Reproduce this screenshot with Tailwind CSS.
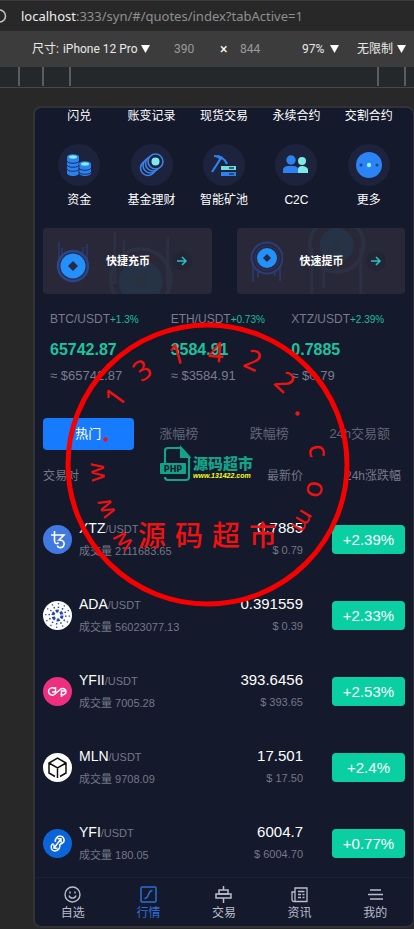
<!DOCTYPE html>
<html lang="zh-CN">
<head>
    <meta charset="UTF-8">
    <meta name="viewport" content="width=device-width, initial-scale=1.0">
    <title>行情</title>
    <script src="https://cdn.jsdelivr.net/npm/@tailwindcss/browser@4"></script>
</head>
<body class="relative flex flex-col h-screen overflow-hidden bg-[#282828] font-['Liberation_Sans','Noto_Sans_CJK_SC',sans-serif]">

    <!-- Browser address bar -->
    <header class="flex items-center h-[31px] shrink-0 border-t border-[#3a3a3a] font-['Noto_Sans','Noto_Sans_CJK_SC',sans-serif]">
        <svg class="-ml-2 size-4 shrink-0" viewBox="0 0 16 16" fill="none" stroke="#c8c8c8" stroke-width="1.5"><circle cx="7.5" cy="8" r="6"/></svg>
        <a href="#/quotes/index?tabActive=1" class="ml-[13px] text-[13px] leading-5 text-[#8f8f8f] whitespace-nowrap"><span class="text-[#eeeeee]">localhost</span>:333/syn/#/quotes/index?tabActive=1</a>
    </header>

    <!-- Device toolbar -->
    <div class="flex items-center h-9 shrink-0 pl-8 pr-2 bg-[#3c3c3c] text-[12px] leading-4 text-[#e8e8e8] font-['Roboto','Noto_Sans_CJK_SC',sans-serif]">
        <label for="device" class="whitespace-nowrap">尺寸:</label>
        <select id="device" class="appearance-none ml-1 w-[78px]"><option>iPhone 12 Pro</option></select>
        <svg class="w-[9px] h-2 shrink-0" viewBox="0 0 9 8" fill="#fff"><path d="M0 0h9L4.500 8z"/></svg>
        <input type="text" aria-label="宽度" value="390" class="ml-6 w-[46px] text-[#9a9a9a]">
        <span class="w-5 text-[14px] text-white">×</span>
        <input type="text" aria-label="高度" value="844" class="w-10 text-[#9a9a9a]">
        <select aria-label="缩放" class="appearance-none ml-auto w-7"><option>97%</option></select>
        <svg class="w-[9px] h-2 shrink-0" viewBox="0 0 9 8" fill="#fff"><path d="M0 0h9L4.500 8z"/></svg>
        <select aria-label="限速" class="appearance-none ml-[18px] w-10"><option>无限制</option></select>
        <svg class="w-[9px] h-2 shrink-0" viewBox="0 0 9 8" fill="#fff"><path d="M0 0h9L4.500 8z"/></svg>
    </div>

    <!-- Ruler -->
    <div class="flex h-[21px] shrink-0 bg-[#25282b] border-b border-[#484848] pb-[1px]">
        <div class="w-5 border-r-2 border-[#5c5c5c]"></div>
        <div class="w-6 border-r-2 border-[#5c5c5c]"></div>
        <div class="w-[27px] border-r-2 border-[#5c5c5c]"></div>
        <div class="flex-1 border-r-2 border-[#5c5c5c]"></div>
        <div class="w-[27px] border-r-2 border-[#5c5c5c]"></div>
        <div class="w-2"></div>
    </div>

    <!-- Phone -->
    <div class="flex-1 min-h-0 flex flex-col mt-[18px] mb-[1px] ml-[33px] border-2 border-r border-[#323237] rounded-lg overflow-hidden bg-[#14192c] text-white">
        <main class="flex-1 min-h-0 overflow-hidden px-2">

            <nav class="grid grid-cols-5 text-center text-[12px] leading-4">
                <a href="#/flash">闪兑</a>
                <a href="#/records">账变记录</a>
                <a href="#/spot">现货交易</a>
                <a href="#/perpetual">永续合约</a>
                <a href="#/delivery">交割合约</a>

                <a href="#/funds" class="flex flex-col items-center mt-5">
                    <svg class="size-[42px] mb-[6px]" viewBox="0 0 42 42">
                        <circle cx="21" cy="21" r="21" fill="#1d233d"/>
                        <path d="M9 13v16c0 4 12 4 12 0V13z" fill="#2c83f0"/>
                        <path d="M21 20v9c0 4 12 4 12 0v-9z" fill="#2c83f0"/>
                        <g fill="none" stroke="#1a2f66" stroke-width="1"><path d="M9 17c0 3 12 3 12 0M9 21c0 3 12 3 12 0M9 25c0 3 12 3 12 0M21 24c0 3 12 3 12 0M21 28c0 3 12 3 12 0M21 19v11"/></g>
                        <ellipse cx="15" cy="13" rx="6" ry="2.700" fill="#2c83f0"/><ellipse cx="15" cy="13" rx="4" ry="1.700" fill="#7ff0f5"/>
                        <ellipse cx="27" cy="20" rx="6" ry="2.700" fill="#2c83f0"/><ellipse cx="27" cy="20" rx="4" ry="1.700" fill="#7ff0f5"/>
                    </svg>
                    资金
                </a>
                <a href="#/fund" class="flex flex-col items-center mt-5">
                    <svg class="size-[42px] mb-[6px]" viewBox="0 0 42 42">
                        <circle cx="21" cy="21" r="21" fill="#1d233d"/>
                        <g fill="#1d233d" stroke="#3a82ea" stroke-width="1.600">
                            <circle cx="17" cy="24" r="7.500"/><circle cx="19.500" cy="21.500" r="7.500"/><circle cx="22" cy="19.500" r="7.500"/><circle cx="24.500" cy="17.500" r="7.500"/>
                        </g>
                        <circle cx="24.500" cy="17.500" r="4" fill="#7fe9f0"/>
                    </svg>
                    基金理财
                </a>
                <a href="#/mining" class="flex flex-col items-center mt-5">
                    <svg class="size-[42px] mb-[6px]" viewBox="0 0 42 42">
                        <circle cx="21" cy="21" r="21" fill="#1d233d"/>
                        <path d="M9 28 18 14M11 12c6 0 11 3 13 8" fill="none" stroke="#2c83f0" stroke-width="2.200"/>
                        <path d="m15 11 5 2-2 3-5-3z" fill="#2c83f0"/>
                        <rect x="18" y="22" width="15" height="4" fill="#74dcdc"/><rect x="18" y="28" width="15" height="4" fill="#2c83f0"/>
                        <path d="M26 24h5M26 30h5" stroke="#1b3c5c" stroke-width="1.500"/>
                    </svg>
                    智能矿池
                </a>
                <a href="#/c2c" class="flex flex-col items-center mt-5">
                    <svg class="size-[42px] mb-[6px]" viewBox="0 0 42 42">
                        <circle cx="21" cy="21" r="21" fill="#1d233d"/>
                        <circle cx="27" cy="17" r="4" fill="#7fe9e6"/><path d="M23 29v-4c0-2 2-3 4-3s6 1 6 4v3z" fill="#7fe9e6"/>
                        <circle cx="16" cy="16" r="4.700" fill="#2c83f0"/><path d="M8 29v-3c0-3 3-4 5-4h5c3 0 5 1 5 4v3z" fill="#2c83f0"/>
                    </svg>
                    C2C
                </a>
                <a href="#/more" class="flex flex-col items-center mt-5">
                    <svg class="size-[42px] mb-[6px]" viewBox="0 0 42 42">
                        <circle cx="21" cy="21" r="21" fill="#1d233d"/>
                        <circle cx="21" cy="21" r="13" fill="#2c83f5"/>
                        <circle cx="13" cy="21" r="1.500" fill="#15458f"/><circle cx="29" cy="21" r="1.500" fill="#15458f"/><circle cx="21" cy="21" r="2.200" fill="#8ff3f5"/>
                    </svg>
                    更多
                </a>
            </nav>

            <div class="grid grid-cols-2 gap-[25px] mt-5">
                <a href="#/recharge" class="relative flex items-center h-[66px] rounded-sm bg-[#282839] overflow-hidden">
                    <svg class="absolute inset-0 size-full" viewBox="0 0 169 66" fill="none">
                        <path d="M72 4v52M81 12v20M125 9v50" stroke="#2c3043" stroke-width="3"/>
                        <circle cx="98" cy="51" r="30" stroke="#2b3043" stroke-width="4"/>
                        <circle cx="98" cy="54" r="22" fill="#263346"/>
                        <path d="m98 45 8 8-8 8-8-8z" fill="#28313f"/>
                    </svg>
                    <svg class="relative w-[34px] h-[50px] ml-3 shrink-0" viewBox="0 0 34 50" fill="none">
                        <path d="M4 6v24M7 12v10M32 8v22M28 11v10" stroke="#2d3869" stroke-width="1.500"/>
                        <circle cx="18" cy="30" r="15" fill="#282c4b" stroke="#2c4588" stroke-width="2.500"/>
                        <circle cx="18" cy="30" r="12.500" fill="#2490fb"/>
                        <path d="m18 25 5 5-5 5-5-5z" fill="#242b45"/>
                    </svg>
                    <span class="relative ml-[17px] text-[11px] leading-4 font-bold">快捷充币</span>
                    <svg class="relative size-5 ml-[22px]" viewBox="0 0 20 20" fill="none">
                        <circle cx="10" cy="10" r="10" fill="#232537"/>
                        <path d="M5 10h9M10 6l4 4-4 4" stroke="#27c4bd" stroke-width="1.500"/>
                    </svg>
                </a>
                <a href="#/withdraw" class="relative flex items-center h-[66px] rounded-sm bg-[#282839] overflow-hidden">
                    <svg class="absolute inset-0 size-full" viewBox="0 0 169 66" fill="none">
                        <path d="M75 20v46M87 40v20M124 20v46" stroke="#2c3043" stroke-width="3"/>
                        <circle cx="100" cy="17" r="27" stroke="#2b3043" stroke-width="4"/>
                        <circle cx="100" cy="17" r="17" fill="#263346"/>
                        <path d="m100 11 6 6-6 6-6-6z" fill="#28313f"/>
                    </svg>
                    <svg class="relative w-[34px] h-[50px] ml-3 shrink-0" viewBox="0 0 34 50" fill="none">
                        <path d="M4 28v18M9 33v9M31 30v15M26 34v6" stroke="#2d3869" stroke-width="1.800"/>
                        <circle cx="18" cy="22" r="15.500" stroke="#2c3c78" stroke-width="2"/>
                        <circle cx="18" cy="22" r="12" stroke="#273061" stroke-width="1.500"/>
                        <circle cx="18" cy="22" r="10" fill="#2490fb"/>
                        <path d="m18 18 4 4-4 4-4-4z" fill="#242b45"/>
                    </svg>
                    <span class="relative ml-[17px] text-[11px] leading-4 font-bold">快速提币</span>
                    <svg class="relative size-5 ml-[22px]" viewBox="0 0 20 20" fill="none">
                        <circle cx="10" cy="10" r="10" fill="#232537"/>
                        <path d="M5 10h9M10 6l4 4-4 4" stroke="#27c4bd" stroke-width="1.500"/>
                    </svg>
                </a>
            </div>

            <div class="grid grid-cols-3 mt-[17px] text-[#787c8c] whitespace-nowrap">
                <div class="pl-[7px]">
                    <p class="text-[12px] leading-4">BTC/USDT<span class="text-[10px] text-[#1cbf9c]">+1.3%</span></p>
                    <p class="mt-3 text-[16px] leading-5 font-bold text-[#1cc39f]">65742.87</p>
                    <p class="mt-2 text-[13px] leading-4">≈ $65742.87</p>
                </div>
                <div class="pl-[7px]">
                    <p class="text-[12px] leading-4">ETH/USDT<span class="text-[10px] text-[#1cbf9c]">+0.73%</span></p>
                    <p class="mt-3 text-[16px] leading-5 font-bold text-[#1cc39f]">3584.91</p>
                    <p class="mt-2 text-[13px] leading-4">≈ $3584.91</p>
                </div>
                <div class="pl-[7px]">
                    <p class="text-[12px] leading-4">XTZ/USDT<span class="text-[10px] text-[#1cbf9c]">+2.39%</span></p>
                    <p class="mt-3 text-[16px] leading-5 font-bold text-[#1cc39f]">0.7885</p>
                    <p class="mt-2 text-[13px] leading-4">≈ $0.79</p>
                </div>
            </div>

            <div class="grid grid-cols-4 mt-[34px] text-[13px] leading-8 text-[#626675]">
                <button type="button" class="h-8 rounded-sm bg-[#177bff] text-white">热门</button>
                <button type="button" class="h-8">涨幅榜</button>
                <button type="button" class="h-8">跌幅榜</button>
                <button type="button" class="h-8">24h交易额</button>
            </div>

            <table class="w-full table-fixed mt-[14px] text-[#747887]">
                <thead>
                    <tr class="h-[37px] align-top text-[12px] leading-6">
                        <th class="text-left font-normal">交易对</th>
                        <th class="w-[100px] text-right font-normal">最新价</th>
                        <th class="w-[102px] pr-1 text-right font-normal">24h涨跌幅</th>
                    </tr>
                </thead>
                <tbody>
                    <tr class="h-[76px]">
                        <td>
                            <div class="flex items-center gap-[7px] whitespace-nowrap">
                                <svg class="size-[29px]" viewBox="0 0 29 29" fill="none"><circle cx="14.500" cy="14.500" r="14.500" fill="#4079e0"/><path d="M8 10h13l-5 5c5 0 6 3 4.500 6-1.500 2.500-6 2-6-.500M11.500 6v10c0 3 3 3 4 1.500" stroke="#fff" stroke-width="1.600"/></svg>
                                <div>
                                    <p class="text-[14px] leading-5 text-white">XTZ<span class="text-[11px] text-[#747887]">/USDT</span></p>
                                    <p class="mt-[2px] text-[11px] leading-5">成交量 2111683.65</p>
                                </div>
                            </div>
                        </td>
                        <td class="text-right">
                            <p class="text-[15px] leading-5 text-white">0.7885</p>
                            <p class="mt-[2px] text-[11px] leading-5">$ 0.79</p>
                        </td>
                        <td><div class="ml-auto w-[73px] rounded bg-[#09cfa3] text-center text-[15px] leading-[29px] text-white">+2.39%</div></td>
                    </tr>
                    <tr class="h-[76px]">
                        <td>
                            <div class="flex items-center gap-[7px] whitespace-nowrap">
                                <svg class="size-[29px]" viewBox="0 0 29 29" fill="none">
                                    <circle cx="14.500" cy="14.500" r="14.500" fill="#fff"/>
                                    <circle cx="14.500" cy="14.500" r="4.500" stroke="#2747a8" stroke-width="3" stroke-dasharray="3 1.710"/>
                                    <circle cx="14.500" cy="14.500" r="8.300" stroke="#2747a8" stroke-width="1.500" stroke-dasharray="1.500 2.850"/>
                                    <circle cx="14.500" cy="14.500" r="11.800" stroke="#2747a8" stroke-width="1.300" stroke-dasharray="1.300 4.880"/>
                                </svg>
                                <div>
                                    <p class="text-[14px] leading-5 text-white">ADA<span class="text-[11px] text-[#747887]">/USDT</span></p>
                                    <p class="mt-[2px] text-[11px] leading-5">成交量 56023077.13</p>
                                </div>
                            </div>
                        </td>
                        <td class="text-right">
                            <p class="text-[15px] leading-5 text-white">0.391559</p>
                            <p class="mt-[2px] text-[11px] leading-5">$ 0.39</p>
                        </td>
                        <td><div class="ml-auto w-[73px] rounded bg-[#09cfa3] text-center text-[15px] leading-[29px] text-white">+2.33%</div></td>
                    </tr>
                    <tr class="h-[76px]">
                        <td>
                            <div class="flex items-center gap-[7px] whitespace-nowrap">
                                <svg class="size-[29px]" viewBox="0 0 29 29" fill="none"><circle cx="14.500" cy="14.500" r="14.500" fill="#ee2f80"/><path d="M12 11.500c-3-2-6.500 0-6.500 3s4 5 6.500 2.500l5-4.500c2.500-2 6-.500 6 2s-3 4.500-5.500 2.500M9 15h3.500v-5M18.500 20v-6h3.500" stroke="#fff" stroke-width="1.500"/></svg>
                                <div>
                                    <p class="text-[14px] leading-5 text-white">YFII<span class="text-[11px] text-[#747887]">/USDT</span></p>
                                    <p class="mt-[2px] text-[11px] leading-5">成交量 7005.28</p>
                                </div>
                            </div>
                        </td>
                        <td class="text-right">
                            <p class="text-[15px] leading-5 text-white">393.6456</p>
                            <p class="mt-[2px] text-[11px] leading-5">$ 393.65</p>
                        </td>
                        <td><div class="ml-auto w-[73px] rounded bg-[#09cfa3] text-center text-[15px] leading-[29px] text-white">+2.53%</div></td>
                    </tr>
                    <tr class="h-[76px]">
                        <td>
                            <div class="flex items-center gap-[7px] whitespace-nowrap">
                                <svg class="size-[29px]" viewBox="0 0 29 29" fill="none"><circle cx="14.500" cy="14.500" r="14.500" fill="#fff"/><path d="M12 23.500 6 20V10l8.500-5 8.500 5v10l-6 3.500M6 10l8.500 5 8.500-5M14.500 15v10" stroke="#111" stroke-width="1.500"/></svg>
                                <div>
                                    <p class="text-[14px] leading-5 text-white">MLN<span class="text-[11px] text-[#747887]">/USDT</span></p>
                                    <p class="mt-[2px] text-[11px] leading-5">成交量 9708.09</p>
                                </div>
                            </div>
                        </td>
                        <td class="text-right">
                            <p class="text-[15px] leading-5 text-white">17.501</p>
                            <p class="mt-[2px] text-[11px] leading-5">$ 17.50</p>
                        </td>
                        <td><div class="ml-auto w-[73px] rounded bg-[#09cfa3] text-center text-[15px] leading-[29px] text-white">+2.4%</div></td>
                    </tr>
                    <tr class="h-[76px]">
                        <td>
                            <div class="flex items-center gap-[7px] whitespace-nowrap">
                                <svg class="size-[29px]" viewBox="0 0 29 29" fill="none"><circle cx="14.500" cy="14.500" r="14.500" fill="#0b65d8"/><path d="M12.500 13c-1-3 2-6.500 5-6 3.500.500 5 5 2 7l-2.500 1.500M16.500 15c1.500 3-1 7-4.500 7s-5-4-3-6.500l1.500-1M11 19l7-9M14.500 9.500l3.500.500v3.500M14.500 19.500 11 19v-3.500" stroke="#fff" stroke-width="1.500"/></svg>
                                <div>
                                    <p class="text-[14px] leading-5 text-white">YFI<span class="text-[11px] text-[#747887]">/USDT</span></p>
                                    <p class="mt-[2px] text-[11px] leading-5">成交量 180.05</p>
                                </div>
                            </div>
                        </td>
                        <td class="text-right">
                            <p class="text-[15px] leading-5 text-white">6004.7</p>
                            <p class="mt-[2px] text-[11px] leading-5">$ 6004.70</p>
                        </td>
                        <td><div class="ml-auto w-[73px] rounded bg-[#09cfa3] text-center text-[15px] leading-[29px] text-white">+0.77%</div></td>
                    </tr>
                </tbody>
            </table>
        </main>

        <!-- Bottom tab bar -->
        <nav class="grid grid-cols-5 shrink-0 h-[49px] pt-2 border-t border-[#1b2238] text-[12px] leading-4 text-[#b9bdcc]">
            <a href="#/favorites" class="flex flex-col items-center gap-[2px]">
                <svg class="size-[17px]" viewBox="0 0 17 17" fill="none" stroke="currentColor" stroke-width="1.400"><circle cx="8.500" cy="8.500" r="7.500"/><path d="M5 9.500c1 3.500 6 3.500 7 0M6 5.500v2M11 5.500v2"/></svg>
                自选
            </a>
            <a href="#/quotes/index" class="flex flex-col items-center gap-[2px] text-[#2b6fdc]">
                <svg class="size-[17px]" viewBox="0 0 17 17" fill="none" stroke="currentColor" stroke-width="1.500"><rect x="1" y="1" width="15" height="15" rx="1"/><path d="M4.500 12.500c5 0 3-8 8-8"/></svg>
                行情
            </a>
            <a href="#/trade" class="flex flex-col items-center gap-[2px]">
                <svg class="size-[17px]" viewBox="0 0 17 17" fill="none" stroke="currentColor" stroke-width="1.500"><path d="M8.500 0v4M8.500 12v5"/><rect x="4" y="4" width="9" height="4"/><rect x="1" y="8" width="15" height="4"/></svg>
                交易
            </a>
            <a href="#/news" class="flex flex-col items-center gap-[2px]">
                <svg class="size-[17px]" viewBox="0 0 17 17" fill="none" stroke="currentColor" stroke-width="1.300"><path d="M4 15.500V2h12v13.500H3c-1.500 0-2-1-2-2V6h3M7 5.500h6.500M7 8.500h3M7 11.500h3M11.500 8.500h2M11.500 11.500h2"/></svg>
                资讯
            </a>
            <a href="#/mine" class="flex flex-col items-center gap-[2px]">
                <svg class="size-[17px]" viewBox="0 0 17 17" fill="none" stroke="currentColor" stroke-width="1.500"><path d="M3 4h11M1 8.500h15M3 13h13"/></svg>
                我的
            </a>
        </nav>
    </div>

    <!-- Stamp over the page -->
    <svg class="absolute left-[65px] top-[322px] size-[285px] pointer-events-none" viewBox="0 0 285 285">
        <circle cx="142.500" cy="142.500" r="139.500" fill="none" stroke="#f70000" stroke-width="5"/>
        <g fill="#f01212" text-anchor="middle" class="text-[28px] font-['Noto_Sans',sans-serif]">
            <g class="text-[24px]">
                <text transform="translate(58 219) rotate(-132)" y="7">w</text>
                <text transform="translate(41 186) rotate(-113)" y="7">w</text>
                <text transform="translate(32 150) rotate(-94)" y="7">w</text>
            </g>
            <circle cx="40.500" cy="117.500" r="2.200"/>
            <text transform="translate(50 75) rotate(-54)" y="10">1</text>
            <text transform="translate(77 48) rotate(-35)" y="10">3</text>
            <text transform="translate(112 32) rotate(-15)" y="10">1</text>
            <text transform="translate(151 30) rotate(4)" y="10">4</text>
            <text transform="translate(188 38) rotate(24)" y="10">2</text>
            <text transform="translate(220 60) rotate(43)" y="10">2</text>
            <circle cx="232.500" cy="91.500" r="2.200"/>
            <text transform="translate(251 129) rotate(83)" y="7">c</text>
            <text transform="translate(249 167) rotate(103)" y="7">o</text>
            <text transform="translate(237 199) rotate(121)" y="7" class="text-[24px]">m</text>
        </g>
        <text x="87 124 161 198" y="224" fill="#f01212" text-anchor="middle" class="text-[28px] font-medium font-['Noto_Sans_CJK_SC',sans-serif]">源码超市</text>

        <g fill="none" stroke="#12a488" stroke-width="2.200">
            <path d="M100 141v-12q0-3 3-3h13l8 9v20q0 3-3 3h-18q-3 0-3-3"/>
            <path d="M116 126v9h8z" fill="#12a488"/>
        </g>
        <rect x="95" y="141" width="26" height="11" rx="1" fill="#12a488"/>
        <text x="108" y="150" text-anchor="middle" fill="#14192c" class="text-[8px] font-bold font-['DejaVu_Sans',sans-serif]">PHP</text>
        <text x="128" y="147" fill="#12a488" class="text-[15px] font-black font-['Noto_Sans_CJK_SC',sans-serif]">源码超市</text>
        <text x="128" y="156" fill="#f2ff1a" class="text-[7px] font-bold italic font-['Liberation_Sans',sans-serif]">www.131422.com</text>
    </svg>

</body>
</html>
